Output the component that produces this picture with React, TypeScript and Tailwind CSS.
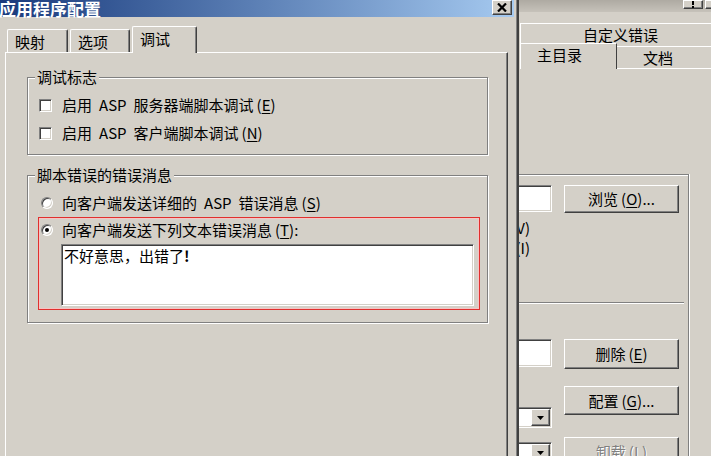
import React from "react";
import clsx from "clsx";

// mnemonic key, e.g. (E)
const Key = ({ k }: { k: string }) => (
  <span className="ml-[3px]">
    (<u className="underline-offset-2">{k}</u>)
  </span>
);

const Asp = () => <span className="mx-[7px]">ASP</span>;

const Check = () => (
  <span className="w-[13px] h-[13px] shrink-0 bg-white border border-t-[#808080] border-l-[#808080] border-r-white border-b-white shadow-[inset_1px_1px_0_#404040,inset_-1px_-1px_0_#d4d0c8]" />
);

const Radio = ({ on }: { on?: boolean }) => (
  <span className="w-[12px] h-[12px] shrink-0 rounded-full bg-white border border-t-[#808080] border-l-[#808080] border-r-white border-b-white shadow-[inset_1px_1px_0_#404040,inset_-1px_-1px_0_#d4d0c8] flex items-center justify-center">
    {on && <span className="w-[4px] h-[4px] rounded-full bg-black" />}
  </span>
);

const Btn = ({
  children,
  dim,
  className,
}: {
  children?: React.ReactNode;
  dim?: boolean;
  className?: string;
}) => (
  <div
    className={clsx(
      "shrink-0 flex items-center justify-center bg-[#d4d0c8] border border-t-white border-l-white border-r-[#404040] border-b-[#404040] shadow-[inset_-1px_-1px_0_#808080] leading-[18px]",
      dim ? "text-[#808080] [text-shadow:1px_1px_0_#fff]" : "text-black",
      className
    )}
  >
    {children}
  </div>
);

const Sunken = ({ className, children }: { className?: string; children?: React.ReactNode }) => (
  <div
    className={clsx(
      "shrink-0 bg-white border border-t-[#808080] border-l-[#808080] border-r-white border-b-white shadow-[inset_1px_1px_0_#404040,inset_-1px_-1px_0_#d4d0c8]",
      className
    )}
  >
    {children}
  </div>
);

const Group = ({
  title,
  className,
  children,
}: {
  title: string;
  className?: string;
  children?: React.ReactNode;
}) => (
  <div
    className={clsx(
      "relative shrink-0 border border-[#808080] shadow-[inset_1px_1px_0_#fff,1px_1px_0_#fff]",
      className
    )}
  >
    <span className="absolute left-[7px] top-[-10px] px-[2px] bg-[#d4d0c8] leading-[18px]">{title}</span>
    {children}
  </div>
);

const Combo = ({ className }: { className?: string }) => (
  <Sunken className={clsx("w-[60px] flex justify-end p-[1px]", className)}>
    <Btn className="w-[19px] h-full">
      <svg width="7" height="4" viewBox="0 0 7 4">
        <polygon points="0,0 7,0 3.5,4" fill="#000" />
      </svg>
    </Btn>
  </Sunken>
);

const tabBase =
  "shrink-0 bg-[#d4d0c8] border-t border-l border-r border-t-white border-l-white border-r-[#404040] shadow-[inset_-1px_0_0_#808080] rounded-t-[2px] px-[7px] leading-[18px]";

export default function App() {
  return (
    <div className="w-[711px] h-[456px] overflow-hidden flex bg-[#d4d0c8] text-black text-[15px] font-['Noto_Sans_CJK_SC',sans-serif]">
      {/* front dialog */}
      <div className="w-[519px] shrink-0 flex flex-col pr-[3px] border-r-2 border-r-[#404040] shadow-[inset_-1px_0_0_#808080]">
        <div className="h-[17px] shrink-0 flex items-start bg-linear-to-r from-[#1a3a7c] to-[#a6caf0]">
          <span className="-ml-[1px] text-white font-bold text-[17px] leading-[17px]">应用程序配置</span>
          <Btn className="ml-auto mr-[2px] w-[20px] h-[15px]">
            <svg width="10" height="9" viewBox="0 0 10 9">
              <path d="M1 0.5 L9 8.5 M9 0.5 L1 8.5" stroke="#000" strokeWidth="2.2" />
            </svg>
          </Btn>
        </div>

        <div className="flex-1 flex flex-col">
          <div className="flex items-end ml-[7px] mt-[9px] h-[26px] shrink-0">
            <div className={clsx(tabBase, "w-[61px] h-[23px] pt-[3px]")}>映射</div>
            <div className={clsx(tabBase, "ml-[2px] w-[60px] h-[23px] pt-[3px]")}>选项</div>
            <div className={clsx(tabBase, "relative z-10 ml-[2px] -mb-px w-[65px] h-[27px] pt-[3px]")}>调试</div>
          </div>

          <div className="ml-[5px] w-[503px] flex-1 flex flex-col border-t border-l border-r border-t-white border-l-white border-r-[#404040] shadow-[inset_-1px_0_0_#808080] pl-[21px] pt-[24px]">
            <Group title="调试标志" className="w-[461px] h-[78px] pt-[18px] pl-[11px]">
              <div className="flex items-center h-[18px] gap-[10px]">
                <Check />
                <span className="leading-[18px]">
                  启用<Asp />服务器端脚本调试<Key k="E" />
                </span>
              </div>
              <div className="flex items-center h-[18px] gap-[10px] mt-[10px]">
                <Check />
                <span className="leading-[18px]">
                  启用<Asp />客户端脚本调试<Key k="N" />
                </span>
              </div>
            </Group>

            <Group title="脚本错误的错误消息" className="mt-[20px] w-[461px] h-[148px] pt-[18px] pl-[10px]">
              <div className="flex items-center h-[18px] gap-[9px] pl-[3px]">
                <Radio />
                <span className="leading-[18px]">
                  向客户端发送详细的<Asp />错误消息<Key k="S" />
                </span>
              </div>
              <div className="mt-[5px] w-[442px] border border-[#e0302e] shadow-[inset_0_0_0_1px_#f6c4c4] pt-[3px] pb-[3px]">
                <div className="flex items-center h-[18px] gap-[9px] pl-[2px]">
                  <Radio on />
                  <span className="leading-[18px]">
                    向客户端发送下列文本错误消息<Key k="T" />:
                  </span>
                </div>
                <Sunken className="mt-[5px] ml-[22px] w-[413px] h-[62px] pl-[2px] pt-[2px] leading-[18px]">
                  不好意思，出错了<b>!</b>
                </Sunken>
              </div>
            </Group>
          </div>
        </div>
      </div>

      {/* window behind */}
      <div className="flex-1 overflow-hidden flex flex-col">
        <div className="h-[12px] shrink-0 flex items-start bg-linear-to-b from-[#aeaaa2] to-[#c6c2ba]">
          <Btn className="ml-[164px] w-[20px] h-[9px]">
            <svg width="4" height="7" viewBox="0 0 4 7">
              <rect x="1" y="0" width="2" height="4" fill="#000" />
              <rect x="1" y="5" width="2" height="2" fill="#000" />
            </svg>
          </Btn>
          <Btn className="ml-[2px] w-[20px] h-[9px]" />
        </div>
        <div className="h-[11px] shrink-0" />
        <div className="ml-[1px] w-[200px] h-[20px] shrink-0 border-t border-l border-white text-center pt-[2px] leading-[18px]">
          自定义错误
        </div>
        <div className="flex h-[26px] shrink-0">
          <div className="ml-[1px] w-[97px] border-t border-l border-r border-t-white border-l-white border-r-[#404040] pl-[16px] pt-[2px] leading-[18px]">
            主目录
          </div>
          <div className="flex-1 mt-[3px] border-t border-b border-white pl-[26px] pt-[2px] leading-[18px]">文档</div>
        </div>

        <div className="mt-[105px] w-[170px] shrink-0 border-t border-r border-[#808080] shadow-[inset_0_1px_0_#fff,1px_0_0_#fff] flex flex-col">
          <div className="flex h-[127px] shrink-0">
            <div className="w-[33px] flex flex-col items-end">
              <Sunken className="mt-[10px] w-[60px] h-[27px]" />
              <div className="mt-[6px] mr-[22px] leading-[20px]">(V)</div>
              <div className="mr-[22px] leading-[20px]">(I)</div>
            </div>
            <div className="ml-[12px] w-[115px] flex flex-col">
              <Btn className="mt-[10px] h-[28px]">
                浏览<Key k="O" />...
              </Btn>
            </div>
          </div>
          <div className="h-[2px] w-[165px] shrink-0 border-t border-[#808080] bg-white" />
          <div className="flex shrink-0">
            <div className="w-[33px] flex flex-col items-end">
              <Sunken className="mt-[35px] w-[60px] h-[28px]" />
              <Combo className="mt-[40px] h-[21px]" />
              <Combo className="mt-[14px] h-[22px]" />
            </div>
            <div className="ml-[12px] w-[115px] flex flex-col">
              <Btn className="mt-[35px] h-[30px]">
                删除<Key k="E" />
              </Btn>
              <Btn className="mt-[17px] h-[29px]">
                配置<Key k="G" />...
              </Btn>
              <Btn dim className="mt-[22px] h-[30px]">
                卸载<Key k="L" />
              </Btn>
            </div>
          </div>
        </div>
      </div>
    </div>
  );
}
